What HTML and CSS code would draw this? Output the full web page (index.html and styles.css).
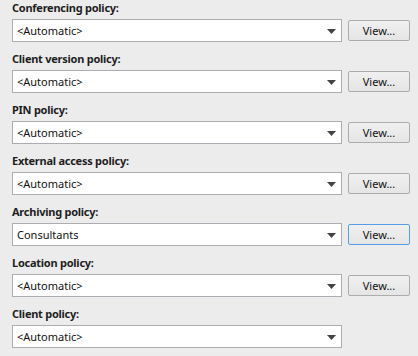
FILE: index.html
```html
<!DOCTYPE html>
<html>
<head>
<meta charset="utf-8">
<link rel="stylesheet" href="styles.css">
</head>
<body>
<div class="form">
  <div class="field">
    <div class="label">Conferencing policy:</div>
    <div class="row">
      <div class="combo"><span class="value">&lt;Automatic&gt;</span><svg class="arrow" width="9" height="5" viewBox="0 0 9 5"><path d="M0 0H9L4.5 5Z"/></svg></div>
      <button class="btn">View...</button>
    </div>
  </div>
  <div class="field">
    <div class="label">Client version policy:</div>
    <div class="row">
      <div class="combo"><span class="value">&lt;Automatic&gt;</span><svg class="arrow" width="9" height="5" viewBox="0 0 9 5"><path d="M0 0H9L4.5 5Z"/></svg></div>
      <button class="btn">View...</button>
    </div>
  </div>
  <div class="field">
    <div class="label">PIN policy:</div>
    <div class="row">
      <div class="combo"><span class="value">&lt;Automatic&gt;</span><svg class="arrow" width="9" height="5" viewBox="0 0 9 5"><path d="M0 0H9L4.5 5Z"/></svg></div>
      <button class="btn">View...</button>
    </div>
  </div>
  <div class="field">
    <div class="label">External access policy:</div>
    <div class="row">
      <div class="combo"><span class="value">&lt;Automatic&gt;</span><svg class="arrow" width="9" height="5" viewBox="0 0 9 5"><path d="M0 0H9L4.5 5Z"/></svg></div>
      <button class="btn">View...</button>
    </div>
  </div>
  <div class="field">
    <div class="label">Archiving policy:</div>
    <div class="row">
      <div class="combo"><span class="value">Consultants</span><svg class="arrow" width="9" height="5" viewBox="0 0 9 5"><path d="M0 0H9L4.5 5Z"/></svg></div>
      <button class="btn btn-focus">View...</button>
    </div>
  </div>
  <div class="field">
    <div class="label">Location policy:</div>
    <div class="row">
      <div class="combo"><span class="value">&lt;Automatic&gt;</span><svg class="arrow" width="9" height="5" viewBox="0 0 9 5"><path d="M0 0H9L4.5 5Z"/></svg></div>
      <button class="btn">View...</button>
    </div>
  </div>
  <div class="field">
    <div class="label">Client policy:</div>
    <div class="row">
      <div class="combo"><span class="value">&lt;Automatic&gt;</span><svg class="arrow" width="9" height="5" viewBox="0 0 9 5"><path d="M0 0H9L4.5 5Z"/></svg></div>
    </div>
  </div>
</div>
</body>
</html>
```

FILE: styles.css
```css
html, body {
  margin: 0;
  padding: 0;
  background: #ececec;
}
body {
  width: 418px;
  height: 356px;
  overflow: hidden;
  font-family: "Noto Sans", "Open Sans", sans-serif;
  font-size: 11px;
  color: #000;
}
.form {
  display: flex;
  flex-direction: column;
  padding: 1px 0 0 12px;
}
.field {
  display: flex;
  flex-direction: column;
  height: 51px;
}
.label {
  font-weight: bold;
  line-height: 13px;
  height: 13px;
  margin-bottom: 5px;
  letter-spacing: -0.25px;
  color: #1e1e1e;
}
.row {
  display: flex;
  align-items: center;
  gap: 6px;
  height: 23px;
}
.combo {
  box-sizing: border-box;
  width: 330px;
  height: 23px;
  background: #fff;
  border: 1px solid #abadb3;
  display: flex;
  align-items: center;
  justify-content: space-between;
  padding: 0 5px 0 4px;
}
.value {
  line-height: 21px;
  color: #111;
}
.arrow {
  fill: #444;
  margin-top: 1px;
}
.btn {
  box-sizing: border-box;
  width: 62px;
  height: 21px;
  border: 1px solid #acacac;
  border-radius: 2px;
  background: linear-gradient(#f0f0f0, #e5e5e5);
  font-family: inherit;
  font-size: 11px;
  color: #111;
  padding: 0;
  line-height: 19px;
}
.btn-focus {
  border-color: #569de5;
}
```
